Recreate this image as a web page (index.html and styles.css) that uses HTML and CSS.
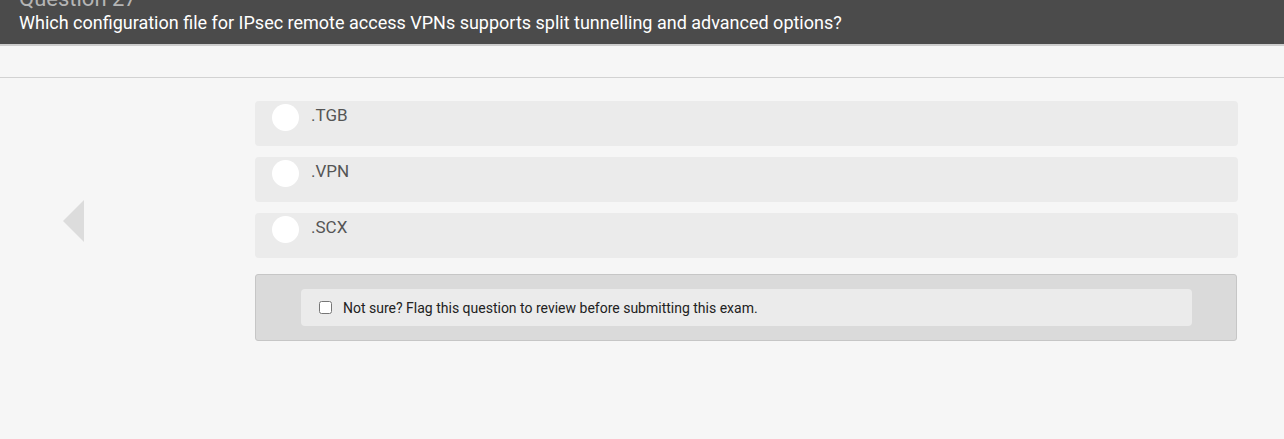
FILE: index.html
```html
<!DOCTYPE html>
<html lang="en">
<head>
<meta charset="utf-8">
<title>Question 27</title>
<link rel="stylesheet" href="styles.css">
</head>
<body>
<header class="q-header">
  <h1 class="q-title">Question 27</h1>
  <p class="q-text">Which configuration file for IPsec remote access VPNs supports split tunnelling and advanced options?</p>
</header>
<div class="q-band"></div>
<main class="q-main">
  <div class="nav-col">
    <span class="arrow-left"></span>
  </div>
  <div class="content">
    <div class="options">
      <label class="option"><span class="radio"></span><span class="opt-text">.TGB</span></label>
      <label class="option"><span class="radio"></span><span class="opt-text">.VPN</span></label>
      <label class="option"><span class="radio"></span><span class="opt-text">.SCX</span></label>
    </div>
    <div class="flag-box">
      <label class="flag-inner"><input type="checkbox" class="flag-check"><span>Not sure? Flag this question to review before submitting this exam.</span></label>
    </div>
  </div>
</main>
</body>
</html>
```

FILE: styles.css
```css
* { box-sizing: border-box; }
html, body { margin: 0; padding: 0; }
body {
  background: #f6f6f6;
  font-family: Roboto, "Liberation Sans", Arial, sans-serif;
  width: 1284px;
  height: 439px;
  overflow: hidden;
}
.q-header {
  height: 46px;
  background: #4b4b4b;
  border-bottom: 2px solid #cdcdcd;
  padding-left: 19px;
  overflow: hidden;
}
.q-title {
  margin: -12px 0 0 0;
  font-size: 22px;
  line-height: 22px;
  font-weight: 400;
  color: #b5b5b5;
}
.q-text {
  margin: 2px 0 0 0;
  font-size: 18px;
  line-height: 22px;
  color: #ffffff;
}
.q-band {
  height: 32px;
  border-bottom: 1px solid #d2d2d2;
}
.q-main {
  display: flex;
  align-items: center;
  padding-top: 23px;
}
.nav-col {
  width: 255px;
  flex: none;
  padding-left: 63px;
  display: flex;
  align-items: center;
}
.arrow-left {
  display: block;
  width: 0;
  height: 0;
  border-top: 21px solid transparent;
  border-bottom: 21px solid transparent;
  border-right: 21px solid #dcdcdc;
}
.content {
  width: 983px;
  flex: none;
}
.options {
  display: flex;
  flex-direction: column;
  gap: 11px;
}
.option {
  display: flex;
  align-items: flex-start;
  gap: 12px;
  height: 45px;
  background: #ebebeb;
  border-radius: 4px;
  padding-left: 17px;
}
.radio {
  width: 27px;
  height: 27px;
  margin-top: 3px;
  border-radius: 50%;
  background: #ffffff;
  flex: none;
}
.opt-text {
  margin-top: 4px;
  font-size: 17px;
  line-height: 20px;
  color: #555555;
}
.flag-box {
  margin-top: 16px;
  width: 982px;
  background: #dadada;
  border: 1px solid #c6c6c6;
  border-radius: 3px;
  padding: 14px 44px 14px 45px;
}
.flag-inner {
  display: flex;
  align-items: center;
  height: 37px;
  background: #ebebeb;
  border-radius: 4px;
  padding-left: 18px;
  gap: 11px;
  font-size: 14px;
  color: #222222;
}
.flag-check {
  margin: 0;
  width: 13px;
  height: 13px;
}
```
